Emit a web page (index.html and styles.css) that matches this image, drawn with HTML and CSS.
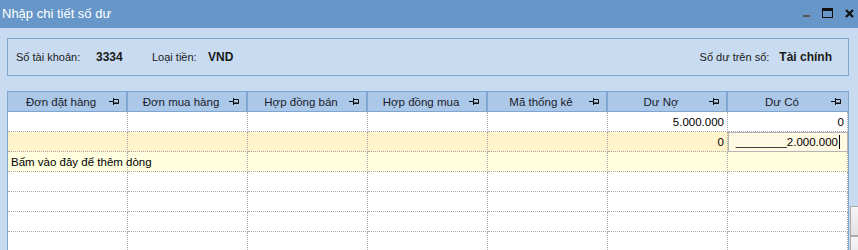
FILE: index.html
```html
<!DOCTYPE html>
<html lang="vi">
<head>
    <meta charset="UTF-8">
    <title>Nhập chi tiết số dư</title>
    <link rel="stylesheet" href="styles.css">
</head>
<body>
    <div class="window">
        <div class="title-bar">
            <span class="title">Nhập chi tiết số dư</span>
            <div class="controls">
                <span class="ctl-min"></span>
                <span class="ctl-max"></span>
                <svg class="ctl-close" width="9" height="9" viewBox="0 0 9 9">
                    <path d="M1 1 L8 8 M8 1 L1 8" stroke="#111" stroke-width="2.2"/>
                </svg>
            </div>
        </div>

        <div class="content">
            <div class="info-box">
                <span class="label lbl-account">Số tài khoản:</span>
                <span class="value val-account">3334</span>
                <span class="label lbl-currency">Loại tiền:</span>
                <span class="value">VND</span>
                <span class="spacer"></span>
                <span class="label lbl-book">Số dư trên sổ:</span>
                <span class="value">Tài chính</span>
            </div>

            <div class="grid-area">
                <div class="grid">
                    <div class="row head">
                        <div class="hcell"><span>Đơn đặt hàng</span><svg class="pin" width="11" height="9" viewBox="0 0 11 9"><path d="M0 4.5 H4 M4.5 1 V8 M5 2.5 H9.5 V6.5 H5" fill="none" stroke="#111" stroke-width="1"/><path d="M5 6 H10" stroke="#111" stroke-width="1"/></svg></div>
                        <div class="hcell"><span>Đơn mua hàng</span><svg class="pin" width="11" height="9" viewBox="0 0 11 9"><path d="M0 4.5 H4 M4.5 1 V8 M5 2.5 H9.5 V6.5 H5" fill="none" stroke="#111" stroke-width="1"/><path d="M5 6 H10" stroke="#111" stroke-width="1"/></svg></div>
                        <div class="hcell"><span>Hợp đồng bán</span><svg class="pin" width="11" height="9" viewBox="0 0 11 9"><path d="M0 4.5 H4 M4.5 1 V8 M5 2.5 H9.5 V6.5 H5" fill="none" stroke="#111" stroke-width="1"/><path d="M5 6 H10" stroke="#111" stroke-width="1"/></svg></div>
                        <div class="hcell"><span>Hợp đồng mua</span><svg class="pin" width="11" height="9" viewBox="0 0 11 9"><path d="M0 4.5 H4 M4.5 1 V8 M5 2.5 H9.5 V6.5 H5" fill="none" stroke="#111" stroke-width="1"/><path d="M5 6 H10" stroke="#111" stroke-width="1"/></svg></div>
                        <div class="hcell"><span>Mã thống kê</span><svg class="pin" width="11" height="9" viewBox="0 0 11 9"><path d="M0 4.5 H4 M4.5 1 V8 M5 2.5 H9.5 V6.5 H5" fill="none" stroke="#111" stroke-width="1"/><path d="M5 6 H10" stroke="#111" stroke-width="1"/></svg></div>
                        <div class="hcell"><span>Dư Nợ</span><svg class="pin" width="11" height="9" viewBox="0 0 11 9"><path d="M0 4.5 H4 M4.5 1 V8 M5 2.5 H9.5 V6.5 H5" fill="none" stroke="#111" stroke-width="1"/><path d="M5 6 H10" stroke="#111" stroke-width="1"/></svg></div>
                        <div class="hcell"><span>Dư Có</span><svg class="pin" width="11" height="9" viewBox="0 0 11 9"><path d="M0 4.5 H4 M4.5 1 V8 M5 2.5 H9.5 V6.5 H5" fill="none" stroke="#111" stroke-width="1"/><path d="M5 6 H10" stroke="#111" stroke-width="1"/></svg></div>
                    </div>

                    <div class="row">
                        <div class="cell"></div><div class="cell"></div><div class="cell"></div>
                        <div class="cell"></div><div class="cell"></div>
                        <div class="cell num">5.000.000</div>
                        <div class="cell num">0</div>
                    </div>

                    <div class="row editing">
                        <div class="cell"></div><div class="cell"></div><div class="cell"></div>
                        <div class="cell"></div><div class="cell"></div>
                        <div class="cell num">0</div>
                        <div class="cell num active">________2.000.000<span class="caret"></span></div>
                    </div>

                    <div class="row new-row">
                        <div class="cell add-text">Bấm vào đây để thêm dòng</div>
                        <div class="cell"></div><div class="cell"></div>
                        <div class="cell"></div><div class="cell"></div><div class="cell"></div>
                        <div class="cell"></div>
                    </div>

                    <div class="row">
                        <div class="cell"></div><div class="cell"></div><div class="cell"></div><div class="cell"></div>
                        <div class="cell"></div><div class="cell"></div><div class="cell"></div>
                    </div>
                    <div class="row">
                        <div class="cell"></div><div class="cell"></div><div class="cell"></div><div class="cell"></div>
                        <div class="cell"></div><div class="cell"></div><div class="cell"></div>
                    </div>
                    <div class="row">
                        <div class="cell"></div><div class="cell"></div><div class="cell"></div><div class="cell"></div>
                        <div class="cell"></div><div class="cell"></div><div class="cell"></div>
                    </div>
                    <div class="row">
                        <div class="cell"></div><div class="cell"></div><div class="cell"></div><div class="cell"></div>
                        <div class="cell"></div><div class="cell"></div><div class="cell"></div>
                    </div>
                </div>
                <div class="side">
                    <div class="side-btn"></div>
                    <div class="side-btn"></div>
                </div>
            </div>
        </div>
    </div>
</body>
</html>
```

FILE: styles.css
```css
* {
    margin: 0;
    padding: 0;
    box-sizing: border-box;
}

body {
    width: 858px;
    height: 250px;
    overflow: hidden;
    background: #c9dbf0;
    font-family: 'Liberation Sans', Arial, sans-serif;
    font-size: 11px;
    color: #000;
}

.window {
    height: 250px;
    overflow: hidden;
}

.title-bar {
    height: 28px;
    background: #6797c8;
    display: flex;
    align-items: center;
    justify-content: space-between;
    padding: 0 3px 0 2px;
}

.title {
    color: #fff;
    font-size: 13px;
    margin-top: -2px;
}

.controls {
    display: flex;
    align-items: center;
    gap: 12px;
    margin-top: -2px;
}

.ctl-min {
    width: 7px;
    height: 2px;
    background: #555;
    margin-top: 5px;
}

.ctl-max {
    width: 11px;
    height: 10px;
    border: 1px solid #111;
    border-top-width: 3px;
}

.ctl-close {
    margin-right: 1px;
}

.content {
    padding: 10px 0 0 7px;
}

.info-box {
    width: 842px;
    height: 38px;
    border: 1px solid #7fa5d1;
    display: flex;
    align-items: center;
    padding: 0 16px 0 8px;
    color: #1a1a1a;
    font-size: 12px;
}

.lbl-account {
    width: 80px;
}

.val-account {
    width: 56px;
}

.lbl-currency {
    width: 56px;
}

.lbl-book {
    margin-right: 10px;
}

.label {
    font-size: 11px;
}

.value {
    font-weight: bold;
}

.spacer {
    flex: 1;
}

.grid-area {
    display: flex;
    margin-top: 15px;
}

.grid {
    width: 842px;
    border-left: 1px solid #7fa5d1;
    border-right: 1px solid #7fa5d1;
    background: #fff;
}

.row {
    display: grid;
    grid-template-columns: repeat(7, 120px);
    height: 20px;
}

.head {
    background: #abc8e8;
    border-top: 1px solid #7fa5d1;
    border-bottom: 1px solid #7fa5d1;
    height: 21px;
}

.hcell {
    position: relative;
    display: flex;
    align-items: center;
    justify-content: center;
    padding-right: 12px;
    border-right: 2px solid #7fa5d1;
    color: #1b1b2a;
    font-size: 11.5px;
}

.hcell:last-child {
    border-right: none;
}

.pin {
    position: absolute;
    right: 6px;
    top: 5px;
}

.cell {
    border-right: 1px dotted #aaa;
    border-bottom: 1px dotted #aaa;
    display: flex;
    align-items: center;
    padding: 0 3px;
    white-space: nowrap;
    font-size: 11.5px;
}

.num {
    justify-content: flex-end;
}

.editing {
    background: #fff3cc;
}

.active {
    border: 1px solid #b5b5b5;
    background: #fff8e2;
    padding-right: 7px;
}

.caret {
    width: 1px;
    height: 14px;
    background: #000;
    margin-left: 1px;
}

.new-row {
    background: #ffffdf;
}

.add-text {
    overflow: visible;
    z-index: 1;
}

.side {
    flex: 1;
    padding: 115px 0 0 1px;
    display: flex;
    flex-direction: column;
}

.side-btn {
    height: 30px;
    background: linear-gradient(#f6f6f6, #e2e2e2);
    border: 1px solid #a9a9a9;
    border-right: none;
}
```
